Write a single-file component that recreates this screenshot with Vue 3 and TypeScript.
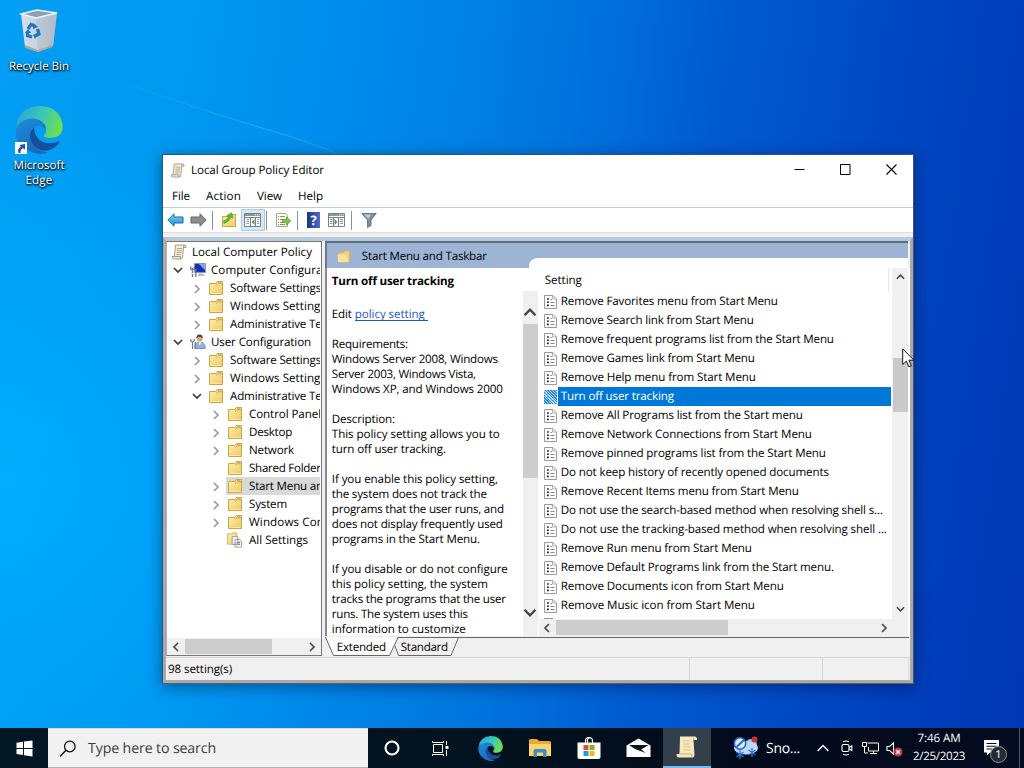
<script setup lang="ts">
interface TreeRow { label: string; w: number; level: number; icon: string; open?: boolean; leaf?: boolean; selected?: boolean }
interface Line { text: string; w: number }

// Spreads a run of text over a given width, as the shell font metrics do
const vFit = {
  mounted(el: HTMLElement, binding: { value: number }) {
    const range = document.createRange()
    range.selectNodeContents(el)
    const width = range.getBoundingClientRect().width
    const count = (el.textContent ?? '').length
    if (count && binding.value) el.style.letterSpacing = `${(binding.value - width) / count}px`
  },
}

const menus: Line[] = [{ text: 'File', w: 18 }, { text: 'Action', w: 35 }, { text: 'View', w: 25 }, { text: 'Help', w: 25 }]

const tree: TreeRow[] = [
  { label: 'Local Computer Policy', w: 120, level: 0, icon: 'scroll', leaf: true },
  { label: 'Computer Configuration', w: 133, level: 1, icon: 'computer', open: true },
  { label: 'Software Settings', w: 91, level: 2, icon: 'folder' },
  { label: 'Windows Settings', w: 96, level: 2, icon: 'folder' },
  { label: 'Administrative Templates', w: 134, level: 2, icon: 'folder' },
  { label: 'User Configuration', w: 100, level: 1, icon: 'user', open: true },
  { label: 'Software Settings', w: 91, level: 2, icon: 'folder' },
  { label: 'Windows Settings', w: 96, level: 2, icon: 'folder' },
  { label: 'Administrative Templates', w: 134, level: 2, icon: 'folder', open: true },
  { label: 'Control Panel', w: 72, level: 3, icon: 'folder' },
  { label: 'Desktop', w: 43, level: 3, icon: 'folder' },
  { label: 'Network', w: 45, level: 3, icon: 'folder' },
  { label: 'Shared Folders', w: 77, level: 3, icon: 'folder', leaf: true },
  { label: 'Start Menu and Taskbar', w: 125, level: 3, icon: 'folder', selected: true },
  { label: 'System', w: 38, level: 3, icon: 'folder' },
  { label: 'Windows Components', w: 124, level: 3, icon: 'folder' },
  { label: 'All Settings', w: 59, level: 3, icon: 'allset', leaf: true },
]

const description: Line[] = [
  { text: 'Requirements:', w: 76 },
  { text: 'Windows Server 2008, Windows', w: 166 },
  { text: 'Server 2003, Windows Vista,', w: 144 },
  { text: 'Windows XP, and Windows 2000', w: 171 },
  { text: '', w: 0 },
  { text: 'Description:', w: 63 },
  { text: 'This policy setting allows you to', w: 168 },
  { text: 'turn off user tracking.', w: 114 },
  { text: '', w: 0 },
  { text: 'If you enable this policy setting,', w: 166 },
  { text: 'the system does not track the', w: 155 },
  { text: 'programs that the user runs, and', w: 172 },
  { text: 'does not display frequently used', w: 171 },
  { text: 'programs in the Start Menu.', w: 148 },
  { text: '', w: 0 },
  { text: 'If you disable or do not configure', w: 176 },
  { text: 'this policy setting, the system', w: 156 },
  { text: 'tracks the programs that the user', w: 174 },
  { text: 'runs. The system uses this', w: 136 },
  { text: 'information to customize', w: 134 },
]

const settings: Line[] = [
  { text: 'Remove Favorites menu from Start Menu', w: 217 },
  { text: 'Remove Search link from Start Menu', w: 193 },
  { text: 'Remove frequent programs list from the Start Menu', w: 273 },
  { text: 'Remove Games link from Start Menu', w: 194 },
  { text: 'Remove Help menu from Start Menu', w: 195 },
  { text: 'Turn off user tracking', w: 113 },
  { text: 'Remove All Programs list from the Start menu', w: 242 },
  { text: 'Remove Network Connections from Start Menu', w: 251 },
  { text: 'Remove pinned programs list from the Start Menu', w: 265 },
  { text: 'Do not keep history of recently opened documents', w: 268 },
  { text: 'Remove Recent Items menu from Start Menu', w: 238 },
  { text: 'Do not use the search-based method when resolving shell s...', w: 322 },
  { text: 'Do not use the tracking-based method when resolving shell ...', w: 326 },
  { text: 'Remove Run menu from Start Menu', w: 191 },
  { text: 'Remove Default Programs link from the Start menu.', w: 273 },
  { text: 'Remove Documents icon from Start Menu', w: 223 },
  { text: 'Remove Music icon from Start Menu', w: 194 },
]
const selectedSetting = 5
</script>

<template>
  <div class="desktop">
    <svg class="defs" width="0" height="0">
      <defs>
        <linearGradient id="gFold" x1="0" y1="0" x2="1" y2="1"><stop offset="0" stop-color="#fdeeb0" /><stop offset="1" stop-color="#f0cb62" /></linearGradient>
        <linearGradient id="gEdgeTop" x1="0" y1=".3" x2="1" y2=".6"><stop offset="0" stop-color="#2ba6d8" /><stop offset=".5" stop-color="#38c8b8" /><stop offset="1" stop-color="#6fe04a" /></linearGradient>
        <linearGradient id="gEdgeLeft" x1="0" y1="0" x2=".6" y2="1"><stop offset="0" stop-color="#1b8fdc" /><stop offset="1" stop-color="#1d66be" /></linearGradient>
        <linearGradient id="gBin" x1="0" y1="0" x2="1" y2="0"><stop offset="0" stop-color="#d8e0e8" /><stop offset=".6" stop-color="#c3ced9" /><stop offset="1" stop-color="#a4b2c0" /></linearGradient>
        <linearGradient id="gArrow" x1="0" y1="0" x2="0" y2="1"><stop offset="0" stop-color="#7fd4f8" /><stop offset="1" stop-color="#1c8fd0" /></linearGradient>
        <linearGradient id="gBeam" gradientUnits="userSpaceOnUse" x1="100" y1="0" x2="350" y2="0"><stop offset="0" stop-color="#5cc4ff" stop-opacity="0" /><stop offset=".7" stop-color="#5cc4ff" stop-opacity=".4" /><stop offset="1" stop-color="#5cc4ff" stop-opacity=".2" /></linearGradient>
      </defs>
      <symbol id="folder" viewBox="0 0 16 16">
        <path d="M1.500 14.500V3.500h6.500l1.200-2h5.300v13z" fill="url(#gFold)" stroke="#cfa545" stroke-width="1" />
        <path d="M8 5.500l1.800-1.700h4.500M10 2.700h3" fill="none" stroke="#c79a3c" stroke-width=".8" />
        <path d="M2.500 13.500h11" stroke="#ffe9a0" />
      </symbol>
      <symbol id="folderOpen" viewBox="0 0 16 16">
        <path d="M2 14V4h5l1.500-2H14v11z" fill="#f4cf70" stroke="#dcae4c" stroke-width=".7" />
        <path d="M1 6h10l2 8H2z" fill="#ffe29a" />
      </symbol>
      <symbol id="scroll" viewBox="0 0 16 16">
        <path d="M4.500 1h9q2 .2 1.500 2.500h-2.500l-1 10q-.3 1.500-2 1.500H3q-2-.3-1.700-2.500h2z" fill="#f4edd6" stroke="#8f8875" stroke-width=".8" />
        <path d="M12.500 3.500q-.4-1.700 1-2.500M3.300 12.500h6.200q-.2 2 .5 2.300" fill="none" stroke="#8f8875" stroke-width=".8" />
        <path d="M6 4.500h5M5.800 6.500h5M5.600 8.500h5M5.400 10.500h4.500" stroke="#aaa28b" stroke-width=".9" />
      </symbol>
      <symbol id="computer" viewBox="0 0 16 16">
        <path d="M4.500 1.500h11v9h-11z" fill="#1734b8" stroke="#8c98b0" /><path d="M9 2h6v6z" fill="#82a8f4" />
        <path d="M8 11.500h5l2 2.500H8z" fill="#b9bec6" />
        <path d="M2.500 6v9M.7 4.500V7l1.800 1.200L4.300 7V4.500M5.800 7v8" fill="none" stroke="#6d7888" stroke-width="1.300" />
        <circle cx="2.500" cy="11.500" r=".8" fill="#d5dee8" />
      </symbol>
      <symbol id="user" viewBox="0 0 16 16">
        <path d="M5 14.500Q4.500 8 9.800 8q5.200 0 5.500 6.500z" fill="#8fb4e0" stroke="#56789e" stroke-width=".7" />
        <circle cx="9.500" cy="4.500" r="3" fill="#d9a880" /><path d="M6.500 4.500Q6 .5 9.500.5T12.700 4.500Q11 2.500 8.500 2.800z" fill="#5c4334" />
        <path d="M8.500 8.200l1.200 3.500 1.500-3.500" fill="#fff" />
        <path d="M.8 5v2l1.700 1 1.700-1V5M2.500 8v7M5.200 8v7" fill="none" stroke="#6d7888" stroke-width="1.200" />
      </symbol>
      <symbol id="allset" viewBox="0 0 17 16">
        <path d="M.5 12.500v-11h4l1-1h5v12z" fill="url(#gFold)" stroke="#cfa545" stroke-width=".8" />
        <path d="M5.500 4.500h6v8h-6zM8.500 7.500h5l2 2v6h-7z" fill="#fff" stroke="#8b8b8b" stroke-width=".9" />
        <path d="M10 10.500h1M12 10.500h2M10 12.500h1M12 12.500h2" stroke="#444" />
      </symbol>
      <symbol id="policy" viewBox="0 0 13 14">
        <path d="M.5.5h8.500l3.500 3.500v9.500H.5z" fill="#fff" stroke="#9a9a9a" /><path d="M8.500.5v3.500h4" fill="none" stroke="#b0b0b0" />
        <path d="M3 4h1.800M3 7.200h1.800M3 10.400h1.800" stroke="#222" stroke-width="1.600" />
        <path d="M6.500 4.500h1.500M6.500 7.500h4M6.500 10.500h4" stroke="#888" />
      </symbol>
      <symbol id="chevR" viewBox="0 0 8 10"><path d="M2 1l4 4-4 4" fill="none" stroke="currentColor" stroke-width="1.700" /></symbol>
      <symbol id="chevL" viewBox="0 0 8 10"><path d="M6 1L2 5l4 4" fill="none" stroke="currentColor" stroke-width="1.700" /></symbol>
      <symbol id="chevD" viewBox="0 0 10 8"><path d="M1 2l4 4 4-4" fill="none" stroke="currentColor" stroke-width="1.700" /></symbol>
      <symbol id="chevU" viewBox="0 0 10 8"><path d="M1 6l4-4 4 4" fill="none" stroke="currentColor" stroke-width="1.700" /></symbol>
      <symbol id="edge" viewBox="0 0 48 48">
        <path d="M1 22Q5 10 20 12Q31 14 31 23Q25 17 19 21Q14 26 17 34Q20 45 33 46.500Q24 50 14 45Q-1 37 1 22z" fill="url(#gEdgeLeft)" />
        <path d="M19 21Q12 28 17 37Q24 47 35 44Q42 41 45 35Q36 39 28 36Q19 32 19 21z" fill="#164f9c" />
        <path d="M1 22Q3 1 24 0Q44 0 47.500 18Q49 31 36 32Q28 32 29 29Q33 25 30 19Q24 11 13 13Q4 15 1 22z" fill="url(#gEdgeTop)" />
      </symbol>
      <symbol id="pane" viewBox="0 0 18 16">
        <path d="M.5 1.500h16v13H.5z" fill="#fff" stroke="#76818b" /><path d="M1 2h15v2H1z" fill="#8b98a4" /><path d="M11 2.800h1M13 2.800h1M15 2.800h.8" stroke="#fff" />
        <path d="M1 5.500h15" stroke="#76818b" />
      </symbol>
    </svg>
    <svg class="beam" width="360" height="160"><path d="M110 78Q200 110 262 128T350 160" fill="none" stroke="url(#gBeam)" stroke-width="1.200" /></svg>

    <div class="shortcut bin">
      <svg width="38" height="44" viewBox="0 0 38 44">
        <path d="M1 5L16 9l21-5-4 33-15 6-13-5z" fill="url(#gBin)" />
        <path d="M16 9l21-5-4 33-15 6z" fill="#b4c0cc" opacity=".65" />
        <path d="M1 5L17 1l20 3-21 5z" fill="#8aa0b4" stroke="#edf3f8" stroke-width="1.300" />
        <path d="M5 36l13 5 14-5 .5 2L18 43 5.500 39z" fill="#b4a59b" />
        <g fill="none" stroke="#1877c8" stroke-width="3.200"><path d="M8 20l3-4.500 4 1.500" /><path d="M17.500 20l1.500 5-4 2" /><path d="M12 28l-4.500-1.500 0-4" /></g>
        <path d="M13 14l5 4-5 2zM18 24l-3 6-2-4zM5 24l3-4 3 4z" fill="#1877c8" />
      </svg>
      <span v-fit="60">Recycle Bin</span>
    </div>
    <div class="shortcut edge">
      <div class="edge-art">
        <svg width="48" height="48"><use href="#edge" /></svg>
        <svg class="link" width="12" height="12" viewBox="0 0 12 12"><path d="M0 0h12v12H0z" fill="#f7f7f7" /><path d="M3.500 11Q2 6.500 6 4.700L4.500 3 10 2v5.500L8 6Q5 7.500 5.500 11z" fill="#234f9c" /></svg>
      </div>
      <span v-fit="51">Microsoft</span>
      <span v-fit="27">Edge</span>
    </div>

    <section class="window">
      <header class="title">
        <svg width="15" height="15"><use href="#scroll" /></svg>
        <span v-fit="133">Local Group Policy Editor</span>
        <div class="caption">
          <svg width="11" height="11"><path d="M.5 5.500h10" stroke="#000" /></svg>
          <svg width="11" height="11"><path d="M.5.500h9.500v10H.5z" fill="none" stroke="#000" /></svg>
          <svg width="11" height="11"><path d="M.5.500l10 10M10.500.5l-10 10" stroke="#000" stroke-width="1.100" /></svg>
        </div>
      </header>
      <nav class="menu"><span v-for="m in menus" :key="m.text" v-fit="m.w">{{ m.text }}</span></nav>
      <div class="tools">
        <svg class="t1" width="17" height="16" viewBox="0 0 17 16"><path d="M.8 8L7 1.800v3.200h9v6H7v3.200z" fill="url(#gArrow)" stroke="#1c6f9f" /></svg>
        <svg class="t2" width="17" height="16" viewBox="0 0 17 16"><path d="M16.200 8L10 1.800v3.200H1v6h9v3.200z" fill="#8e8e8e" stroke="#646464" /></svg>
        <i class="sep s1"></i>
        <svg class="t3" width="16" height="16" viewBox="0 0 16 16"><path d="M1.500 14.500v-10h6l1.500-2h5.500v12z" fill="url(#gFold)" stroke="#cfa545" /><path d="M2.500 9q4-1 5-4.500L5.500 4 10.500.8 12 6l-2-1Q8 10 3 11.500z" fill="#64bd2e" stroke="#3e9119" stroke-width=".6" /></svg>
        <span class="pressed"><svg width="18" height="16" viewBox="0 0 18 16"><use href="#pane" /><path d="M6.500 6v8M11.500 6v8" stroke="#76818b" /><path d="M2.500 7.500h2.500M2.500 9.500h2.500M2.500 11.500h2.500M13 7.500h2M13 9.500h2M13 11.500h2" stroke="#8b98a4" /><path d="M10.500 7v6L7.500 10z" fill="#4c9f3a" /></svg></span>
        <i class="sep s2"></i>
        <svg class="t5" width="16" height="16" viewBox="0 0 16 16"><path d="M1.500 1.500h9l2 2v11h-11z" fill="#fffef0" stroke="#aaa68e" /><path d="M3 4.500h1M5 4.500h5M3 7.500h1M5 7.500h4M3 10.500h1M5 10.500h4M3 12.500h1M5 12.500h5" stroke="#8b887a" /><path d="M7.500 7.500h4V5l4.300 4-4.300 4v-2.500h-4z" fill="#7ac943" stroke="#4c9d25" stroke-width=".7" /></svg>
        <i class="sep s3"></i>
        <span class="help">?</span>
        <svg class="t7" width="18" height="16" viewBox="0 0 18 16"><use href="#pane" /><path d="M5.500 6v8M10.500 6v8" stroke="#76818b" /><path d="M2 7.500h2.500M2 9.500h2.500M2 11.500h2.500M12 7.500h3M12 9.500h3M12 11.500h3" stroke="#8b98a4" /><path d="M6.500 7v6l3-3z" fill="#4c9f3a" /></svg>
        <i class="sep s4"></i>
        <svg class="t8" width="16" height="16" viewBox="0 0 16 16"><path d="M.8 1.500h14.400L10 8v5.500l-3.500 2V8z" fill="#7890a3" stroke="#536879" stroke-width=".8" /><path d="M3 2.500h7L7.500 7z" fill="#b9cad6" /></svg>
      </div>

      <div class="frame">
        <div class="panes">
          <aside class="tree">
            <div v-for="(r, i) in tree" :key="i" class="node" :class="['l' + r.level, { selected: r.selected }]">
              <svg v-if="!r.leaf && !r.open" class="chev closed" width="8" height="10"><use href="#chevR" /></svg>
              <svg v-else-if="r.open" class="chev" width="10" height="8"><use href="#chevD" /></svg>
              <span class="cell">
                <svg class="ico" width="16" height="16"><use :href="'#' + r.icon" /></svg>
                <span v-fit="r.w">{{ r.label }}</span>
              </span>
            </div>
            <div class="hbar tree-bar">
              <svg width="8" height="10"><use href="#chevL" /></svg><i class="thumb"></i><svg width="8" height="10"><use href="#chevR" /></svg>
            </div>
          </aside>

          <main class="result">
            <div class="banner"><svg width="16" height="15"><use href="#folderOpen" /></svg><span v-fit="125">Start Menu and Taskbar</span></div>
            <div class="split">
              <div class="desc">
                <p class="name"><span v-fit="122">Turn off user tracking</span></p>
                <p class="edit"><span v-fit="20">Edit</span><a><span v-fit="70">policy setting</span></a></p>
                <p v-for="(d, i) in description" :key="i"><span v-fit="d.w">{{ d.text }}</span></p>
              </div>
              <div class="vbar desc-bar">
                <svg width="14" height="11"><use href="#chevU" /></svg><i class="thumb"></i><svg width="14" height="11"><use href="#chevD" /></svg>
              </div>
              <div class="list">
                <div class="rows">
                  <div class="head"><span v-fit="37">Setting</span></div>
                  <div v-for="(s, i) in settings" :key="i" class="row" :class="{ selected: i === selectedSetting }">
                    <span class="mark"><svg width="13" height="14"><use href="#policy" /></svg></span>
                    <span class="label"><span v-fit="s.w">{{ s.text }}</span></span>
                  </div>
                  <div class="stub"></div>
                </div>
                <div class="hbar list-bar">
                  <svg width="8" height="10"><use href="#chevL" /></svg><i class="thumb"></i><svg width="8" height="10"><use href="#chevR" /></svg>
                </div>
              </div>
              <div class="vbar list-vbar">
                <svg width="9" height="8"><use href="#chevU" /></svg><i class="thumb"></i><svg width="9" height="8"><use href="#chevD" /></svg>
              </div>
            </div>
            <div class="tabs">
              <svg class="tabline" width="584" height="20" viewBox="0 0 584 20">
                <path d="M.5 0l8 18.500h56L73 0z" fill="#fff" />
                <path d="M72.500.5H584M.5 0l8 18.500H64.500L73 .5M70 9l3.500 9.500H126L133.500.5" fill="none" stroke="#666" />
              </svg>
              <span v-fit="49">Extended</span><span v-fit="47">Standard</span>
            </div>
          </main>
        </div>
        <footer class="status"><span class="count"><span v-fit="64">98 setting(s)</span></span><i class="c2"></i><i class="c3"></i></footer>
      </div>
    </section>

    <footer class="taskbar">
      <div class="start"><svg width="17" height="17" viewBox="0 0 17 17" fill="#fff"><path d="M.5 2.800L7 1.800v6.100H.500zM8 1.600L16.500.4v7.500H8zM.5 8.900H7V15l-6.500-1zM8 8.900h8.500v7.500L8 15.200z" /></svg></div>
      <div class="search"><svg width="18" height="18" viewBox="0 0 18 18"><circle cx="10.800" cy="6.500" r="5.300" fill="none" stroke="#111" stroke-width="1.300" /><path d="M7 10.300L1 16.500" stroke="#111" stroke-width="1.400" /></svg><span v-fit="128">Type here to search</span></div>
      <div class="slot flush"><svg width="18" height="18"><circle cx="9" cy="9" r="6.500" fill="none" stroke="#fff" stroke-width="2.100" /></svg></div>
      <div class="slot flush"><svg width="17" height="17" viewBox="0 0 17 17" fill="none" stroke="#fff"><path d="M1.500 4.500h9v8h-9zM.5 1v1.500h11V1M.5 16v-1.500h11V16M14.500 1v4M14.500 10v6" /><path d="M13.500 6h3v3h-3z" fill="#fff" stroke="none" /></svg></div>
      <div class="slot wide"><svg width="25" height="25"><use href="#edge" /></svg></div>
      <div class="slot"><svg width="22" height="20" viewBox="0 0 22 20"><path d="M0 2.500Q0 1 1.500 1H8l2 2h10.500q1.500 0 1.500 1.500V18H0z" fill="#eba832" /><path d="M0 6h22v12H0z" fill="#fbd56e" /><path d="M4.500 19v-6q0-2 2-2h9q2 0 2 2v6h-3.500v-4.500H8V19z" fill="#3c8cc8" /></svg></div>
      <div class="slot"><svg width="24" height="24" viewBox="0 0 24 24"><path d="M8.500 7V5q0-3.500 3.500-3.500T15.500 5v2M10.500 7V4.500q0-3 3.200-2.500" fill="none" stroke="#fff" stroke-width="1.200" /><path d="M.5 6.500h23V21q0 2-2 2h-19q-2 0-2-2z" fill="#fff" /><path d="M6.500 9H11.500v5h-5z" fill="#e84e2c" /><path d="M12.500 9h5v5h-5z" fill="#7cb427" /><path d="M6.500 15h5v5h-5z" fill="#1ca0df" /><path d="M12.500 15h5v5h-5z" fill="#f6b61c" /></svg></div>
      <div class="slot"><svg width="25" height="20" viewBox="0 0 25 20"><path d="M.5 7.500L12.500.5l12 7V19H.5z" fill="#fff" /><path d="M3 7h19.500l-7.300 4.500 4.500 3.500L9 11z" fill="#071420" /></svg></div>
      <div class="slot active"><svg width="24" height="24" viewBox="0 0 24 24"><path d="M5 1.500h15q2.500 1 2 3.500h-3.500l1 15q-.4 2.500-2 2.500H3q-2-1-1.500-3.500h3z" fill="#f8e9bd" /><path d="M18.500 5q-.5-3 1.500-3.500M4.500 19h12q-.2 3 1 3.500" fill="none" stroke="#d2b065" /><path d="M8 6h7M8 9h7M8.500 12h7M8.500 15h7" stroke="#d7c394" stroke-width="1.200" /></svg></div>
      <div class="weather">
        <svg width="26" height="25" viewBox="0 0 26 25"><circle cx="18" cy="9" r="6" fill="#a6c9f2" /><ellipse cx="13" cy="12" rx="12" ry="6.500" fill="#bed9f7" /><circle cx="7" cy="7.500" r="5.700" fill="#dceaff" stroke="#2567c8" stroke-width="1.600" /><path d="M3.500 11L11 4" stroke="#2567c8" stroke-width="1.800" /><circle cx="21.500" cy="3.500" r="3" fill="#cf2d38" /><path d="M7 14v9M3.500 16l7 5M3.500 21l7-5M19 12v9M15.500 14l7 5M15.500 19l7-5" stroke="#247ddd" stroke-width="1.300" /></svg>
        <span v-fit="34">Sno...</span>
      </div>
      <div class="tray">
        <svg width="12" height="10" viewBox="0 0 12 10"><path d="M.6 8L6 2.500 11.400 8" fill="none" stroke="#fff" stroke-width="1.300" /></svg>
        <svg width="12" height="16" viewBox="0 0 12 16" fill="none" stroke="#fff" stroke-width="1.100"><rect x="2" y="4.500" width="7" height="7" rx="1.500" /><path d="M9 7.500l2.800-1.800v4.800L9 8.800M3 1.800q3-1.500 6 0M3 14.200q3 1.500 6 0" /></svg>
        <svg width="17" height="16" viewBox="0 0 17 16" fill="none" stroke="#fff"><path d="M5.500 3h11v8h-10v-4M8 13.500h7M11.500 11v2.500M.5 2.500h4v4h-4zM2.500 6.500V13h3.500" /></svg>
        <svg width="17" height="17" viewBox="0 0 17 17"><path d="M1 6.500h2.500L7.500 3v11L3.500 10.500H1z" fill="none" stroke="#fff" stroke-width="1.100" /><circle cx="12" cy="12" r="4.600" fill="#c7343d" /><path d="M10 10l4 4M14 10l-4 4" stroke="#fff" stroke-width="1.200" /></svg>
      </div>
      <div class="clock"><span v-fit="43">7:46 AM</span><span v-fit="52">2/25/2023</span></div>
      <div class="notes">
        <svg width="18" height="18" viewBox="0 0 18 18"><path d="M1 1h15v12.500H7L4 16.500v-3H1z" fill="#fff" /><path d="M3.500 4.500h10M3.500 7.200h10M3.500 10h6" stroke="#071020" stroke-width="1.100" /></svg>
        <span class="badge">1</span>
      </div>
      <i class="peek"></i>
    </footer>

    <svg class="cursor" width="13" height="20" viewBox="0 0 13 20"><path d="M.7.900v15.600l3.700-3.400 2.500 5.700 2.500-1.100-2.500-5.500h5z" fill="#fff" stroke="#111" stroke-width="1" /></svg>
  </div>
</template>

<style>
html, body { overflow: hidden; }
</style>

<style scoped>
.desktop { position: relative; width: 1024px; height: 768px; overflow: hidden; font: 11.6px/15px "Open Sans", "Noto Sans", sans-serif; color: #000; white-space: pre; text-rendering: geometricPrecision;
  background: radial-gradient(ellipse 420px 360px at 0 480px, rgba(0, 178, 255, .75), rgba(0, 170, 255, 0)), linear-gradient(98deg, #039ff4 0%, #0098f0 18%, #0088e9 36%, #0073dd 52%, #005ad0 65%, #004bc6 77%, #003fbc 88%, #0037b3 100%); }
.desktop svg { display: block; flex: none; overflow: visible; }
.desktop .defs, .desktop .beam { position: absolute; left: 0; top: 0; }
.desktop i { display: block; flex: none; }
p { margin: 0; }
.shortcut { position: absolute; width: 78px; display: flex; flex-direction: column; align-items: center; color: #fff; text-shadow: 0 1px 2px #000, 1px 1px 2px #000; }
.bin { left: 0; top: 9px; }
.bin span { margin-top: 6px; }
.edge { left: 0; top: 106px; }
.edge-art { position: relative; margin-bottom: 4px; }
.edge-art .link { position: absolute; left: 0; bottom: 0; }

.window { position: absolute; left: 162px; top: 154px; width: 752px; height: 530px; box-sizing: border-box; border: 1px solid #2a5778; border-right-color: #42536e; border-bottom-color: #55606c; background: #fff; display: flex; flex-direction: column; box-shadow: 0 3px 14px rgba(0, 10, 40, .45); }
.title { height: 31px; flex: none; display: flex; align-items: center; padding-left: 7px; gap: 6px; }
.caption { margin-left: auto; display: flex; gap: 35px; padding-right: 16px; margin-top: -2px; }
.menu { height: 21px; flex: none; padding-bottom: 1px; box-sizing: border-box; display: flex; align-items: center; padding-left: 9px; gap: 16px; }
.tools { height: 26px; flex: none; box-sizing: border-box; border-top: 1px solid #c6cbce; border-bottom: 1px solid #dcdcdc; display: flex; align-items: center; padding: 0 0 0 4px; }
.t2 { margin-left: 6px; }
.sep { width: 1px; height: 19px; background: #8d9296; }
.s1 { margin-left: 5px; }
.t3 { margin-left: 8px; }
.pressed { box-sizing: border-box; width: 24px; height: 22px; margin-left: 4px; border: 1px solid #a5cbea; background: #d5e8f8; display: flex; align-items: center; justify-content: center; }
.s2 { margin-left: 1px; }
.t5 { margin-left: 8px; }
.s3 { margin-left: 6px; }
.help { width: 13px; height: 16px; margin-left: 9px; background: linear-gradient(90deg, #1c3383, #4a6cc8); color: #fff; font-weight: 700; font-size: 13px; line-height: 16px; text-align: center; }
.t7 { margin-left: 8px; }
.s4 { margin-left: 5px; }
.t8 { margin-left: 9px; }

.frame { flex: 1; margin-top: 4px; box-shadow: 0 -4px 0 #f0f0f0; border: solid #a9a9a9; border-width: 0 3px 3px; border-top: 4px solid #b5c9dc; background: #f0f0f0; display: flex; flex-direction: column; }
.panes { height: 415px; flex: none; display: flex; gap: 3px; }
.tree { width: 156px; box-sizing: border-box; border: 1px solid #777; border-left-color: #b0b0b0; background: #fff; display: flex; flex-direction: column; padding-top: 1px; overflow: hidden; }
.node { height: 18px; flex: none; display: flex; align-items: center; position: relative; overflow: hidden; margin-right: 1px; }
.chev { color: #3c3c3c; margin-right: 7px; }
.chev.closed { color: #9a9a9a; margin-right: 7px; position: relative; left: 1px; top: 1px; }
.l0 { padding-left: 4px; }
.l1 { padding-left: 6px; }
.l2 { padding-left: 25px; }
.l2 .chev:not(.closed) { margin-right: 6px; }
.l2 .closed { margin-right: 8px; }
.l3 { padding-left: 44px; }
.l3 > .cell:first-child { margin-left: 15px; }
.cell { display: flex; align-items: center; gap: 5px; height: 18px; flex: none; }
.l2 .cell { gap: 6px; }
.l3 .cell { padding-left: 1px; gap: 6px; }
.selected .cell { background: #d9d9d9; }
.hbar { display: flex; align-items: center; justify-content: space-between; background: #f0f0f0; color: #4a4a4a; }
.tree-bar { height: 17px; margin-top: auto; padding: 0 5px; }
.tree-bar .thumb { width: 87px; height: 15px; margin-right: 31px; background: #cdcdcd; }

.result { width: 586px; display: flex; flex-direction: column; }
.banner { position: relative; flex: none; box-sizing: border-box; height: 27px; border-top: 2px solid #5e6d7c; border-left: 2px solid #6a7888; background: #9db4d5; display: flex; align-items: center; padding: 1px 0 0 9px; gap: 10px; margin-right: 2px; }
.banner::after { content: ""; position: absolute; left: 202px; right: 0; bottom: 0; height: 10px; background: #fff; border-top-left-radius: 9px 8px; }
.split { height: 368px; flex: none; display: flex; background: #fff; border-left: 2px solid #8b8b8b; border-right: 2px solid #fff; }
.desc { width: 191px; padding: 6px 0 0 5px; overflow: hidden; flex: none; }
.desc p { height: 15px; line-height: 15px; }
.desc .name { font-weight: 700; height: 33px; }
.desc .edit { height: 30px; display: flex; gap: 3px; }
.edit a { color: #1a5cbf; border-bottom: 1px solid #1a5cbf; height: 13px; width: 73px; }
.vbar { display: flex; flex-direction: column; align-items: center; background: #f0f0f0; color: #444; flex: none; }
.desc-bar { width: 15px; margin-top: 23px; box-sizing: border-box; padding: 16px 0 18px; justify-content: space-between; }
.desc-bar .thumb { width: 15px; height: 154px; margin-bottom: 123px; background: #cdcdcd; }
.list { flex: 1; display: flex; flex-direction: column; padding-left: 1px; }
.rows { height: 351px; overflow: hidden; }
.head { height: 24px; display: flex; align-items: center; padding-left: 6px; border-right: 1px solid #e5e5e5; margin-right: 3px; }
.row { height: 19px; display: flex; align-items: center; padding-left: 5px; }
.mark { position: relative; width: 13px; height: 14px; }
.row .label { flex: 1; height: 19px; line-height: 20px; padding-left: 2px; margin: 0 1px 0 2px; }
.row.selected .label { background: #0078d7; color: #fff; margin-left: 1px; padding-left: 3px; }
.selected .mark::after { content: ""; position: absolute; inset: 0; background: repeating-linear-gradient(45deg, #0078d7 0 1px, #a9d6f0 1px 2px); opacity: .82; }
.stub { margin: 3px 0 0 5px; width: 9px; height: 1px; background: #929292; }
.list-bar { height: 17px; padding: 0 4px; }
.list-bar .thumb { width: 172px; height: 15px; margin-right: 147px; background: #cdcdcd; }
.list-vbar { width: 16px; height: 351px; box-sizing: border-box; padding-top: 5px; box-shadow: 0 17px 0 #f0f0f0; }
.list-vbar .thumb { width: 15px; height: 54px; margin: 77px 0 193px; background: #c9c9c9; }
.tabs { height: 19px; flex: none; box-sizing: border-box; position: relative; display: flex; padding: 1px 0 0 12px; gap: 15px; line-height: 19px; margin-top: 1px; }
.tabline { position: absolute; left: 0; top: 0; }
.tabs span { position: relative; }
.status { flex: 1; margin-top: 1px; display: flex; border-top: 1px solid #d5d5d5; align-items: center; }
.count { width: 521px; padding-left: 2px; }
.status i { height: 22px; box-sizing: border-box; border-left: 1px solid #d3d3d3; }
.c2 { width: 133px; }
.c3 { width: 87px; border-right: 1px solid #ddd; }

.taskbar { position: absolute; left: 0; top: 728px; width: 1024px; height: 40px; display: flex; align-items: center; color: #fff; background: linear-gradient(90deg, #031724, #03131f 45%, #020a1b 75%, #030b1f); }
.start { width: 48px; display: flex; justify-content: center; }
.search { width: 320px; height: 40px; box-sizing: border-box; border-top: 1px solid #dadada; border-bottom: 1px solid #b5b5b5; background: #f1f1f1; color: #3b3b3b; display: flex; align-items: center; padding: 1px 0 0 11px; gap: 11px; font-size: 14.200px; }
.slot { width: 48px; height: 40px; display: flex; align-items: center; justify-content: center; margin-right: 1px; }
.flush { margin-right: 0; }
.wide { width: 50px; margin-left: 1px; }
.slot.active { box-sizing: border-box; background: #333f4a; border-bottom: 2px solid #76b9ed; margin-right: 0; }
.weather { display: flex; align-items: center; gap: 7px; font-size: 14px; margin-left: 22px; width: 67px; }
.tray { display: flex; align-items: center; gap: 11px; margin-left: 17px; }
.tray svg:nth-child(3) { margin-left: -1px; }
.tray svg:nth-child(4) { margin-left: -4px; }
.clock { width: 54px; margin-left: 9px; display: flex; flex-direction: column; align-items: center; line-height: 18px; flex: none; }
.notes { position: relative; margin-left: 17px; }
.badge { position: absolute; left: 7px; top: 7px; width: 15px; height: 15px; border: 1px solid #8c939b; border-radius: 50%; background: #252b33; font-size: 11px; line-height: 15px; text-align: center; }
.peek { width: 1px; height: 40px; margin-left: auto; margin-right: 4px; background: #4c5562; }
.desktop .cursor { position: absolute; left: 902px; top: 348px; }
</style>
